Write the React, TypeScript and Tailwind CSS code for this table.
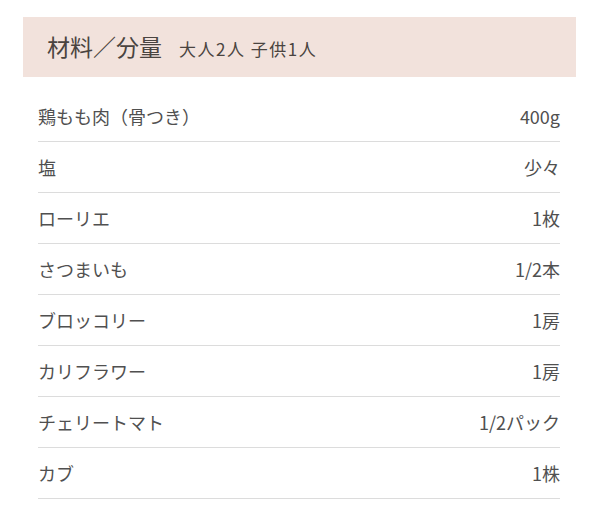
import React from 'react';

interface Ingredient {
  name: string;
  amount: string;
}

const INGREDIENTS: Ingredient[] = [
  { name: '鶏もも肉（骨つき）', amount: '400g' },
  { name: '塩', amount: '少々' },
  { name: 'ローリエ', amount: '1枚' },
  { name: 'さつまいも', amount: '1/2本' },
  { name: 'ブロッコリー', amount: '1房' },
  { name: 'カリフラワー', amount: '1房' },
  { name: 'チェリートマト', amount: '1/2パック' },
  { name: 'カブ', amount: '1株' },
];

export default function App() {
  return (
    <div
      className="w-[600px] h-[520px] bg-white pt-[17px] text-[#505050] overflow-hidden"
      style={{ fontFamily: '"Noto Sans CJK JP", "Noto Sans", sans-serif' }}
    >
      <div className="ml-[23px] w-[553px] h-[60px] bg-[#f2e2dc] flex items-baseline pl-[24px] pt-[13px]">
        <h2 className="text-[23px] leading-[32px] text-[#4a4440]">材料／分量</h2>
        <span className="ml-[17px] text-[17px] tracking-[1.5px] text-[#4a4440]">大人2人 子供1人</span>
      </div>

      <ul className="ml-[38px] w-[522px] mt-[14px]">
        {INGREDIENTS.map((item) => (
          <li
            key={item.name}
            className="h-[51px] border-b border-[#dcdcdc] flex items-center justify-between text-[18px]"
          >
            <span>{item.name}</span>
            <span>{item.amount}</span>
          </li>
        ))}
      </ul>
    </div>
  );
}
